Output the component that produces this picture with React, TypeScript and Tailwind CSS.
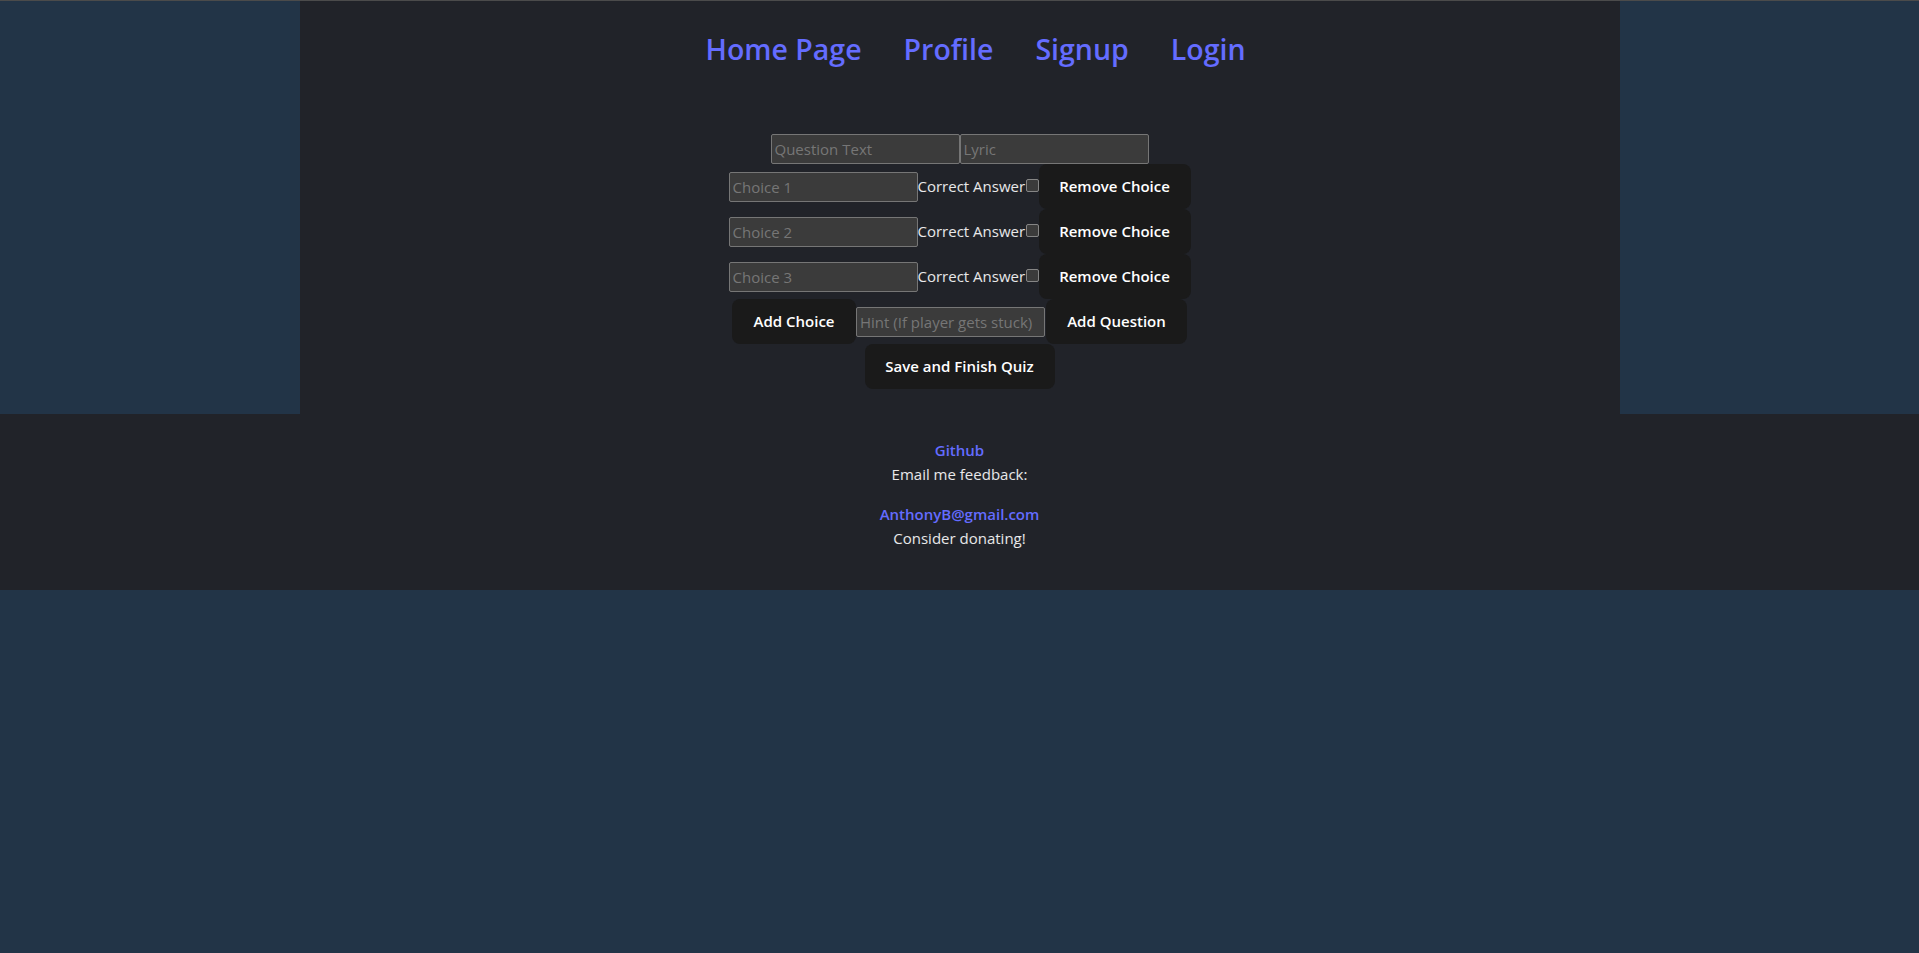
import React, { useState } from "react";

interface Choice {
  id: number;
  text: string;
  correct: boolean;
}

const font = "font-['Open_Sans','Noto_Sans',sans-serif]";

const inputClass =
  "w-[189px] h-[30px] px-[3px] bg-[#3b3b3b] border border-[#767676] rounded-[2px] text-[15px] text-white/90 placeholder:text-[#767676] outline-none";

const buttonClass =
  "h-[45px] rounded-[8px] bg-[#1a1a1a] text-white text-[15px] font-semibold border border-transparent hover:border-[#646cff]";

const App: React.FC = () => {
  const [question, setQuestion] = useState("");
  const [lyric, setLyric] = useState("");
  const [hint, setHint] = useState("");
  const [choices, setChoices] = useState<Choice[]>([
    { id: 1, text: "", correct: false },
    { id: 2, text: "", correct: false },
    { id: 3, text: "", correct: false },
  ]);

  const handleAddChoice = () => {
    setChoices([...choices, { id: Date.now(), text: "", correct: false }]);
  };

  const handleRemoveChoice = (id: number) => {
    setChoices(choices.filter((c) => c.id !== id));
  };

  const handleChoiceChange = (id: number, text: string) => {
    setChoices(choices.map((c) => (c.id === id ? { ...c, text } : c)));
  };

  const handleCorrectChange = (id: number, correct: boolean) => {
    setChoices(choices.map((c) => (c.id === id ? { ...c, correct } : c)));
  };

  return (
    <div className={`min-h-screen bg-[#223447] ${font}`}>
      <div className="h-px bg-[#4b4b4b]" />
      <div className="w-[1320px] mx-auto bg-[#212329] pt-[30px] pb-[25px]">
        <nav className="flex justify-center gap-[42px] pl-[32px] text-[28.5px] leading-[36px] font-semibold text-[#646cff]">
          <a href="#">Home Page</a>
          <a href="#">Profile</a>
          <a href="#">Signup</a>
          <a href="#">Login</a>
        </nav>

        <form
          className="mt-[67px] flex flex-col items-center"
          onSubmit={(e) => e.preventDefault()}
        >
          <div className="flex h-[30px]">
            <input
              className={inputClass}
              placeholder="Question Text"
              value={question}
              onChange={(e) => setQuestion(e.target.value)}
            />
            <input
              className={inputClass}
              placeholder="Lyric"
              value={lyric}
              onChange={(e) => setLyric(e.target.value)}
            />
          </div>

          {choices.map((choice, index) => (
            <div key={choice.id} className="flex items-center h-[45px]">
              <input
                className={inputClass}
                placeholder={`Choice ${index + 1}`}
                value={choice.text}
                onChange={(e) => handleChoiceChange(choice.id, e.target.value)}
              />
              <span className="w-[108px] text-[15px] text-white/90 whitespace-nowrap">
                Correct Answer
              </span>
              <input
                type="checkbox"
                checked={choice.correct}
                onChange={(e) => handleCorrectChange(choice.id, e.target.checked)}
                className="appearance-none w-[13px] h-[13px] -mt-[2px] bg-[#3b3b3b] border border-[#858585] rounded-[2px] checked:bg-[#646cff]"
              />
              <button
                type="button"
                onClick={() => handleRemoveChoice(choice.id)}
                className={`${buttonClass} w-[152px]`}
              >
                Remove Choice
              </button>
            </div>
          ))}

          <div className="flex items-center h-[45px]">
            <button
              type="button"
              onClick={handleAddChoice}
              className={`${buttonClass} w-[124px]`}
            >
              Add Choice
            </button>
            <input
              className={`${inputClass} w-[188px]`}
              placeholder="Hint (If player gets stuck)"
              value={hint}
              onChange={(e) => setHint(e.target.value)}
            />
            <button type="button" className={`${buttonClass} ml-px w-[141px]`}>
              Add Question
            </button>
          </div>

          <button type="submit" className={`${buttonClass} w-[190px]`}>
            Save and Finish Quiz
          </button>
        </form>
      </div>

      <footer className="bg-[#212329] pt-[24px] pb-[40px] flex flex-col items-center text-[15px] leading-[24px] text-white/90">
        <a href="#" className="font-semibold text-[#646cff]">
          Github
        </a>
        <p className="mb-[16px]">Email me feedback:</p>
        <a href="#" className="font-semibold text-[#646cff]">
          AnthonyB@gmail.com
        </a>
        <p>Consider donating!</p>
      </footer>
    </div>
  );
};

export default App;
